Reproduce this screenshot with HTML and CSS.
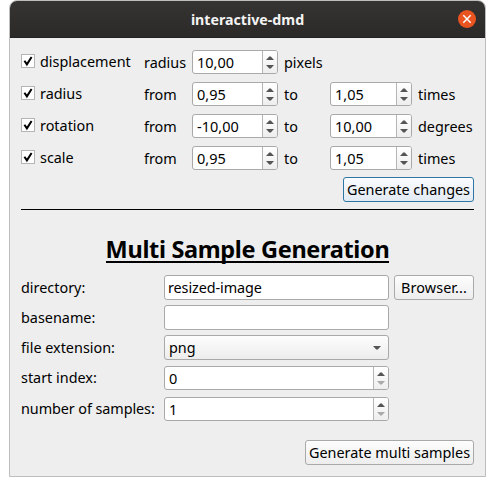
FILE: index.html
```html
<!DOCTYPE html>
<html lang="en">
<head>
<meta charset="utf-8">
<title>interactive-dmd</title>
<link rel="stylesheet" href="styles.css">
</head>
<body>
<svg class="symbols" aria-hidden="true">
  <symbol id="tick" viewBox="0 0 14 14"><path d="M3.4 6.7 5.9 10.4 10.6 3" fill="none" stroke="#000" stroke-width="2"/></symbol>
  <symbol id="up" viewBox="0 0 8 4"><path d="M0 4 3 .7Q4-.2 5 .7L8 4Z"/></symbol>
  <symbol id="down" viewBox="0 0 8 4"><path d="M0 0 3 3.3Q4 4.2 5 3.3L8 0Z"/></symbol>
</svg>
<main class="window">
  <header class="titlebar">
    <h1>interactive-dmd</h1>
    <button class="close" aria-label="Close"><svg viewBox="0 0 18 18"><path d="m5.3 5.3 7.4 7.4m0-7.4-7.4 7.4" stroke="#fff" stroke-width="1.5"/></svg></button>
  </header>
  <section class="changes">
    <div class="row">
      <label class="check"><i class="box"><svg><use href="#tick"/></svg></i><span class="name">displacement</span></label>
      <span class="word">radius</span>
      <div class="spin"><span class="value">10,00</span><span class="arrows"><svg><use href="#up"/></svg><svg><use href="#down"/></svg></span></div>
      <span class="unit">pixels</span>
    </div>
    <div class="row">
      <label class="check"><i class="box"><svg><use href="#tick"/></svg></i><span class="name">radius</span></label>
      <span class="word">from</span>
      <div class="spin"><span class="value">0,95</span><span class="arrows"><svg><use href="#up"/></svg><svg><use href="#down"/></svg></span></div>
      <span class="unit">to</span>
      <div class="spin"><span class="value">1,05</span><span class="arrows"><svg><use href="#up"/></svg><svg><use href="#down"/></svg></span></div>
      <span class="unit">times</span>
    </div>
    <div class="row">
      <label class="check"><i class="box"><svg><use href="#tick"/></svg></i><span class="name">rotation</span></label>
      <span class="word">from</span>
      <div class="spin"><span class="value">-10,00</span><span class="arrows"><svg><use href="#up"/></svg><svg><use href="#down"/></svg></span></div>
      <span class="unit">to</span>
      <div class="spin"><span class="value">10,00</span><span class="arrows"><svg><use href="#up"/></svg><svg><use href="#down"/></svg></span></div>
      <span class="unit">degrees</span>
    </div>
    <div class="row">
      <label class="check"><i class="box"><svg><use href="#tick"/></svg></i><span class="name">scale</span></label>
      <span class="word">from</span>
      <div class="spin"><span class="value">0,95</span><span class="arrows"><svg><use href="#up"/></svg><svg><use href="#down"/></svg></span></div>
      <span class="unit">to</span>
      <div class="spin"><span class="value">1,05</span><span class="arrows"><svg><use href="#up"/></svg><svg><use href="#down"/></svg></span></div>
      <span class="unit">times</span>
    </div>
    <button class="button focused">Generate changes</button>
  </section>
  <section class="samples">
    <h2><span class="underlined">Multi Sample Generation</span></h2>
    <div class="form">
      <label>directory:</label>
      <div class="field">resized-image</div>
      <button class="button browse">Browser...</button>
      <label>basename:</label>
      <div class="field"></div>
      <label>file extension:</label>
      <div class="combo">png<svg><use href="#down"/></svg></div>
      <label>start index:</label>
      <div class="spin first"><span class="value">0</span><span class="arrows"><svg><use href="#up"/></svg><svg class="off"><use href="#down"/></svg></span></div>
      <label class="long">number of samples:</label>
      <div class="spin"><span class="value">1</span><span class="arrows"><svg><use href="#up"/></svg><svg class="off"><use href="#down"/></svg></span></div>
    </div>
    <button class="button multi">Generate multi samples</button>
  </section>
</main>
</body>
</html>
```
FILE: styles.css
```css
* { box-sizing: border-box; }
body { margin: 0; background: #fff; color: #000; font: 14.4px/20px "Noto Sans", "Open Sans", sans-serif; white-space: nowrap; }
svg { display: block; }
.symbols { display: none; }
.window { width: 477px; height: 477px; margin-left: 9px; border: 1px solid #bdbdbd; border-radius: 8px 8px 0 0; background: #eee; overflow: hidden; }
.titlebar { display: grid; grid-template-columns: 36px 1fr 36px; align-items: center; height: 37px; background: linear-gradient(#353432, #2c2a29); border-bottom: 1px solid #222; color: #f3f3f3; }
h1 { grid-column: 2; margin: 0; padding-top: 1px; font-size: 14.2px; line-height: 20px; text-align: center; }
.close { width: 18px; height: 18px; margin-left: 9px; padding: 0; border: 0; border-radius: 50%; background: #e95420; }
.close svg { width: 18px; height: 18px; }
.changes { display: flex; flex-direction: column; gap: 8px; margin: 0 11px; padding-top: 12px; height: 172px; border-bottom: 1px solid #000; }
.row { display: grid; grid-template-columns: 123px 48px 86px 52px 82px 62px; height: 24px; flex: none; align-items: center; }
.check { display: flex; align-items: center; gap: 5px; margin-top: -2px; }
.name { padding-top: 2px; }
.word, .unit { padding-top: 2px; }
.box { width: 14px; height: 14px; border: 1px solid #b5b5b5; background: #fff; }
.box svg { width: 14px; height: 14px; margin: -1px; }
.unit { padding-left: 6px; }
.spin, .field, .combo, .button { border: 1px solid #a9a9a9; border-radius: 3px; }
.spin { display: flex; height: 24px; background: #fff; overflow: hidden; }
.value { flex: 1; padding-left: 4px; line-height: 23px; font-size: 14.5px; }
.arrows { display: flex; flex-direction: column; align-items: center; gap: 5px; width: 15px; padding-top: 5px; border-left: 1px solid #b5b5b5; background: linear-gradient(#fff, #eee); fill: #555; }
.arrows svg { width: 8px; height: 4px; }
.off { fill: #aaa; }
.button { display: flex; align-items: center; justify-content: center; height: 25px; padding: 0; color: #000; font: inherit; background: linear-gradient(#fdfdfd, #ededed); }
.focused { align-self: flex-end; width: 131px; margin-top: -1px; border-color: #2d76a4; background: linear-gradient(#fafcff, #e3eaf2); }
.samples { margin: 0 11px; padding-top: 25px; }
h2 { height: 40px; margin: 0; font-size: 23.5px; line-height: 28px; letter-spacing: -.33px; }
.underlined { display: block; width: fit-content; height: 28px; margin: 0 auto; border-bottom: 2px solid #000; }
.form { display: grid; grid-template-columns: 143px 225px 80px; row-gap: 5px; align-items: center; }
.form label { grid-column: 1; }
.form .long { letter-spacing: -.08px; }
.field, .combo { display: flex; align-items: center; height: 25px; padding-left: 3px; background: #fff; }
.field { letter-spacing: -.08px; }
.combo { justify-content: space-between; padding: 0 7px 0 4px; background: linear-gradient(#fdfdfd, #ededed); }
.combo svg { width: 8px; height: 4px; fill: #555; }
.form .spin { margin-top: 1px; }
.form .spin.first { margin-bottom: 1px; }
.browse { margin-left: 5px; width: 80px; letter-spacing: .1px; }
.multi { width: 169px; margin: 19px 0 0 auto; }
```
